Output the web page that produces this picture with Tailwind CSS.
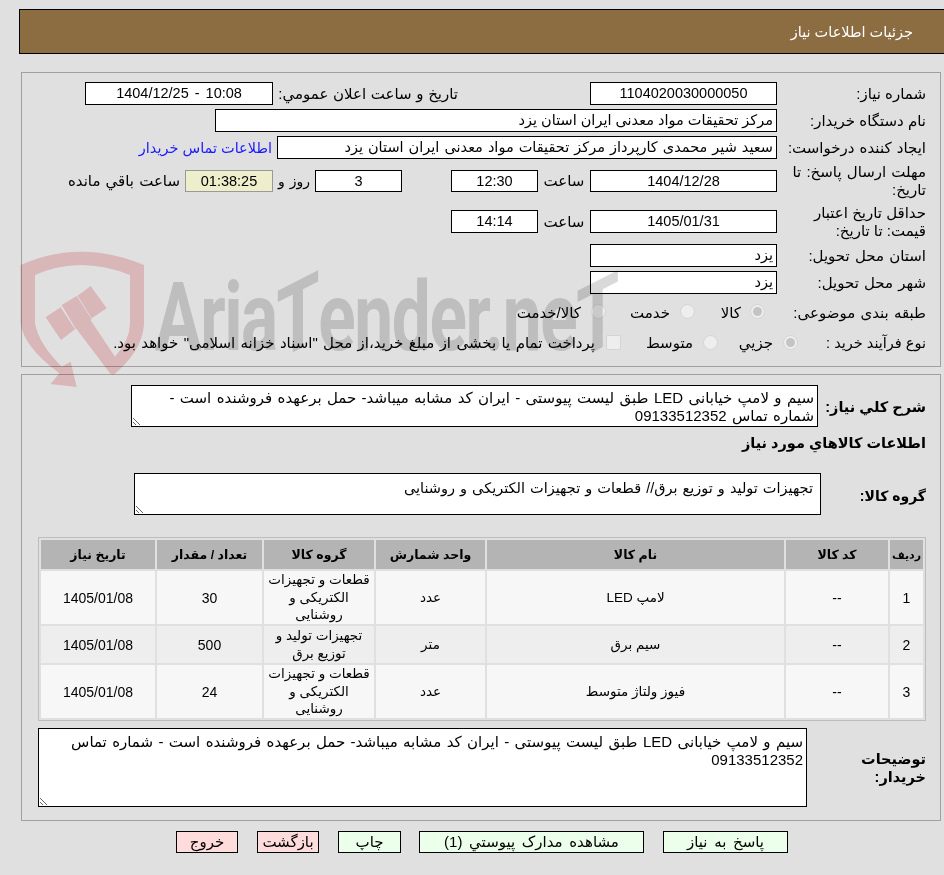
<!DOCTYPE html>
<html lang="fa" dir="rtl">
<head>
  <meta charset="UTF-8" />
  <title>جزئیات اطلاعات نیاز</title>
  <script src="https://cdn.jsdelivr.net/npm/@tailwindcss/browser@4"></script>
</head>
<body class="bg-[#e0e0e0] text-black text-[15px] [word-spacing:1px] leading-[18px] font-['Liberation_Sans','DejaVu_Sans',sans-serif] h-[875px] overflow-hidden relative">

  <!-- header -->
  <div class="ml-[19px] mt-[9px] h-[45px] bg-[#8c6d42] border-y border-l border-black text-white text-[14.5px] [word-spacing:0] flex items-center pr-[31px]">جزئیات اطلاعات نیاز</div>

  <!-- need details -->
  <div class="ml-[21px] mr-[3px] mt-[18px] h-[295px] border border-[#a0a0a0] pt-[9px] pr-[14px]">
    <div class="flex items-center h-[23px]">
      <div class="w-[149px] shrink-0 [word-spacing:0]">شماره نیاز:</div>
      <div class="w-[187px] h-[23px] bg-white border border-black text-center text-[14.5px] leading-[21px]">1104020030000050</div>
      <div class="w-[185px] mr-[132px] whitespace-nowrap [word-spacing:0.5px]">تاریخ و ساعت اعلان عمومي:</div>
      <div class="w-[188px] h-[23px] bg-white border border-black text-center text-[14.5px] [word-spacing:2px] leading-[21px]" dir="ltr">1404/12/25 - 10:08</div>
    </div>
    <div class="flex items-center h-[23px] mt-[4px]">
      <div class="w-[149px] shrink-0 [word-spacing:0]">نام دستگاه خریدار:</div>
      <div class="w-[562px] h-[23px] bg-white border border-black pr-[3px] text-[14.5px] [word-spacing:0] leading-[21px]">مرکز تحقیقات مواد معدنی ایران استان یزد</div>
    </div>
    <div class="flex items-center h-[23px] mt-[4px]">
      <div class="w-[149px] shrink-0 whitespace-nowrap">ایجاد کننده درخواست:</div>
      <div class="w-[500px] h-[23px] bg-white border border-black pr-[3px] text-[14.5px] leading-[21px]">سعید شیر محمدی کارپرداز مرکز تحقیقات مواد معدنی ایران استان یزد</div>
      <a class="mr-[5px] text-[#1a1aff] text-[14.5px] [word-spacing:0] whitespace-nowrap">اطلاعات تماس خریدار</a>
    </div>
    <div class="flex items-center h-[22px] mt-[11px]">
      <div class="w-[149px] shrink-0">مهلت ارسال پاسخ: تا تاریخ:</div>
      <div class="w-[187px] h-[22px] bg-white border border-black text-center text-[14.5px] leading-[20px]">1404/12/28</div>
      <div class="w-[52px] text-center">ساعت</div>
      <div class="w-[87px] h-[22px] bg-white border border-black text-center text-[14.5px] leading-[20px]">12:30</div>
      <div class="w-[87px] h-[22px] mr-[49px] bg-white border border-black text-center text-[14.5px] leading-[20px]">3</div>
      <div class="w-[42px] text-center text-[14px]">روز و</div>
      <div class="w-[88px] h-[22px] bg-[#eeeecc] border border-[#999] text-center text-[14.5px] leading-[20px]">01:38:25</div>
      <div class="mr-[5px] whitespace-nowrap">ساعت باقي مانده</div>
    </div>
    <div class="flex items-center h-[23px] mt-[18px]">
      <div class="w-[149px] shrink-0 [word-spacing:0]">حداقل تاریخ اعتبار قیمت: تا تاریخ:</div>
      <div class="w-[187px] h-[23px] bg-white border border-black text-center text-[14.5px] leading-[21px]">1405/01/31</div>
      <div class="w-[52px] text-center">ساعت</div>
      <div class="w-[87px] h-[23px] bg-white border border-black text-center text-[14.5px] leading-[21px]">14:14</div>
    </div>
    <div class="flex items-center h-[23px] mt-[11px]">
      <div class="w-[149px] shrink-0">استان محل تحویل:</div>
      <div class="w-[187px] h-[23px] bg-white border border-black pr-[3px] text-[14.5px] leading-[21px]">یزد</div>
    </div>
    <div class="flex items-center h-[23px] mt-[4px]">
      <div class="w-[149px] shrink-0">شهر محل تحویل:</div>
      <div class="w-[187px] h-[23px] bg-white border border-black pr-[3px] text-[14.5px] leading-[21px]">یزد</div>
    </div>
    <div class="flex items-center h-[22px] mt-[8px]">
      <div class="w-[161px] shrink-0 whitespace-nowrap">طبقه بندی موضوعی:</div>
      <div class="w-[70px] flex items-center gap-[9px]">
        <span class="w-[15px] h-[15px] mb-[3px] rounded-full border border-[#d4d4d4] bg-[#eeeeee] flex items-center justify-center"><span class="w-[9px] h-[9px] rounded-full bg-[#c4c4c4]"></span></span>
        <span>کالا</span>
      </div>
      <div class="w-[89px] flex items-center gap-[10px]">
        <span class="w-[15px] h-[15px] mb-[3px] rounded-full border border-[#d4d4d4] bg-[#eeeeee]"></span>
        <span>خدمت</span>
      </div>
      <div class="flex items-center gap-[10px]">
        <span class="w-[15px] h-[15px] mb-[3px] rounded-full border border-[#d4d4d4] bg-[#eeeeee]"></span>
        <span>کالا/خدمت</span>
      </div>
    </div>
    <div class="flex items-center h-[22px] mt-[8px]">
      <div class="w-[128px] shrink-0 whitespace-nowrap text-[14.5px] [word-spacing:0]">نوع فرآیند خرید :</div>
      <div class="w-[80px] flex items-center gap-[10px]">
        <span class="w-[15px] h-[15px] mb-[2px] rounded-full border border-[#d4d4d4] bg-[#eeeeee] flex items-center justify-center"><span class="w-[9px] h-[9px] rounded-full bg-[#c4c4c4]"></span></span>
        <span>جزیي</span>
      </div>
      <div class="w-[97px] flex items-center gap-[10px]">
        <span class="w-[15px] h-[15px] mb-[2px] rounded-full border border-[#d4d4d4] bg-[#eeeeee]"></span>
        <span>متوسط</span>
      </div>
      <div class="flex items-center gap-[11px]">
        <span class="w-[15px] h-[15px] mb-[2px] rounded-[2px] border border-[#d4d4d4] bg-[#eeeeee]"></span>
        <span class="whitespace-nowrap [word-spacing:1.2px]">پرداخت تمام یا بخشی از مبلغ خرید،از محل "اسناد خزانه اسلامی" خواهد بود.</span>
      </div>
    </div>
  </div>

  <!-- goods -->
  <div class="ml-[21px] mr-[3px] mt-[7px] h-[447px] border border-[#a0a0a0] pt-[10px] pr-[14px]">
    <div class="flex items-center">
      <div class="w-[108px] shrink-0 font-bold text-[14.5px] [word-spacing:0] mt-[1px] whitespace-nowrap">شرح کلي نیاز:</div>
      <textarea readonly class="w-[687px] h-[42px] bg-white border border-black pt-[3px] pr-[3px] pl-[3px] [word-spacing:1.2px] overflow-hidden block">سیم و لامپ خیابانی LED طبق لیست پیوستی - ایران کد مشابه میباشد- حمل برعهده فروشنده است - شماره تماس 09133512352</textarea>
    </div>
    <div class="mt-[7px] font-bold text-[14.5px] [word-spacing:0]">اطلاعات کالاهاي مورد نیاز</div>
    <div class="flex items-center mt-[21px]">
      <div class="w-[105px] shrink-0 font-bold text-[14px] [word-spacing:0] mt-[4px]">گروه کالا:</div>
      <textarea readonly class="w-[687px] h-[42px] bg-white border border-black pt-[5px] pr-[7px] pl-[3px] text-[14.5px] [word-spacing:1px] overflow-hidden block">تجهیزات تولید و توزیع برق// قطعات و تجهیزات الکتریکی و روشنایی</textarea>
    </div>
    <table class="mt-[22px] w-[888px] table-fixed border-separate border-spacing-[2px] border border-[#bdbdbd] text-center">
      <colgroup>
        <col class="w-[33px]" /><col class="w-[102px]" /><col class="w-[297px]" /><col class="w-[109px]" /><col class="w-[110px]" /><col class="w-[105px]" /><col class="w-[114px]" />
      </colgroup>
      <thead>
        <tr class="h-[29px] bg-[#b4b4b4] font-bold text-[12.5px] [word-spacing:0]">
          <th class="p-0 text-[11px]">ردیف</th><th class="p-0">کد کالا</th><th class="p-0">نام کالا</th><th class="p-0">واحد شمارش</th><th class="p-0">گروه کالا</th><th class="p-0">تعداد / مقدار</th><th class="p-0">تاریخ نیاز</th>
        </tr>
      </thead>
      <tbody class="text-[13.5px] [word-spacing:0]">
        <tr class="h-[53px] bg-[#f7f7f7]">
          <td class="text-[14px]">1</td><td class="text-[14px]">--</td><td>لامپ LED</td><td>عدد</td><td class="leading-[17.6px]">قطعات و تجهیزات<br />الکتریکی و<br />روشنایی</td><td class="text-[14px]">30</td><td class="text-[14px]">1405/01/08</td>
        </tr>
        <tr class="h-[37px] bg-[#eeeeee]">
          <td class="text-[14px]">2</td><td class="text-[14px]">--</td><td>سیم برق</td><td>متر</td><td class="leading-[17.6px]">تجهیزات تولید و<br />توزیع برق</td><td class="text-[14px]">500</td><td class="text-[14px]">1405/01/08</td>
        </tr>
        <tr class="h-[53px] bg-[#f7f7f7]">
          <td class="text-[14px]">3</td><td class="text-[14px]">--</td><td>فیوز ولتاژ متوسط</td><td>عدد</td><td class="leading-[17.6px]">قطعات و تجهیزات<br />الکتریکی و<br />روشنایی</td><td class="text-[14px]">24</td><td class="text-[14px]">1405/01/08</td>
        </tr>
      </tbody>
    </table>
    <div class="flex items-center mt-[7px]">
      <div class="w-[119px] shrink-0 font-bold text-[14.5px] [word-spacing:0] pl-[40px]">توضیحات خریدار:</div>
      <textarea readonly class="w-[769px] h-[79px] bg-white border border-black pt-[4px] pr-[3px] pl-[3px] [word-spacing:1.2px] overflow-hidden block">سیم و لامپ خیابانی LED طبق لیست پیوستی - ایران کد مشابه میباشد- حمل برعهده فروشنده است - شماره تماس 09133512352</textarea>
    </div>
  </div>

  <!-- actions -->
  <div class="flex mt-[10px] mr-[156px] gap-[19px] text-center leading-[20px] [word-spacing:2.5px]">
    <div class="w-[125px] h-[22px] bg-[#ebffeb] border border-black">پاسخ به نیاز</div>
    <div class="w-[225px] h-[22px] bg-[#ebffeb] border border-black">مشاهده مدارک پیوستي (1)</div>
    <div class="w-[63px] h-[22px] bg-[#ebffeb] border border-black -mr-px">چاپ</div>
    <div class="w-[62px] h-[22px] bg-[#ffdcdc] border border-black">بازگشت</div>
    <div class="w-[62px] h-[22px] bg-[#ffdcdc] border border-black">خروج</div>
  </div>

  <!-- watermark, multiplied over the page -->
  <div class="absolute inset-0 z-10 pointer-events-none mix-blend-multiply" dir="ltr">
    <svg class="absolute left-[20px] top-[245px]" width="127" height="145" viewBox="60 135 381 435">
      <path fill="#f7cfd2" d="M62 195 Q240 115 432 195 L432 375 Q425 455 340 525 L330 520 L228 385 L270 358 L345 470 Q390 420 390 370 L390 225 Q240 165 105 225 L105 370 Q115 430 185 500 L212 485 L230 561 L152 552 L178 520 Q70 440 62 370 Z"/>
      <path fill="#f7cfd2" d="M137 352 L182 322 L225 388 L183 420 Z M185 315 L230 288 L275 358 L228 388 Z M233 287 L272 258 L320 325 L275 355 Z"/>
    </svg>
    <div class="absolute left-[155px] top-[262px] origin-left scale-x-[0.715] whitespace-nowrap text-[97px] leading-[110px] font-bold text-[#d9d9d9] font-['Roboto',sans-serif] tracking-[-2px] [word-spacing:0]">Aria<span class="inline-block -skew-y-[20deg]">T</span>ender.ne<span class="inline-block -skew-y-[20deg]">T</span></div>
  </div>
</body>
</html>
